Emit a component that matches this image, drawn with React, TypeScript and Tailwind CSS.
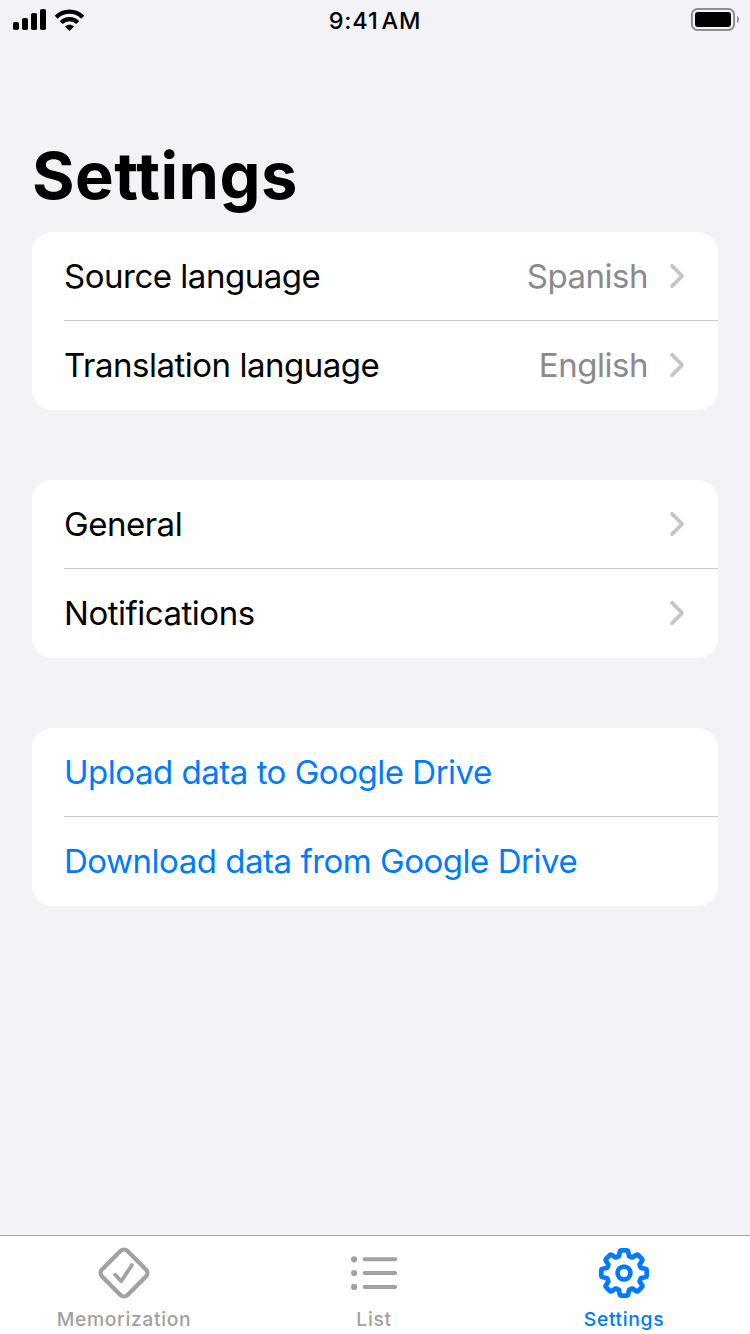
import React from "react";

type Row = { label: string; value?: string; action?: boolean };

function Chevron() {
  return (
    <svg className="ml-5 h-[26px] w-4" viewBox="0 0 16 26" fill="none">
      <path d="M3 2.7 13.2 13 3 23.3" stroke="#c4c4c7" strokeWidth="3.7" strokeLinecap="round" strokeLinejoin="round" />
    </svg>
  );
}

function Group({ rows }: { rows: Row[] }) {
  return (
    <section className="h-[178px] rounded-[20px] bg-white pl-8">
      {rows.map((row, i) => (
        <div key={row.label} className={`flex h-[89px] items-center pr-[33px] text-[33px] leading-[40px] tracking-[-0.48px] ${i === 0 ? "border-b border-[#c6c6c8]" : "pb-px"}`}>
          <span className={`flex-1 whitespace-nowrap ${row.action ? "text-[#007aff]" : "text-black"}`}>{row.label}</span>
          {row.value && <span className="pr-px text-[#8a8a8e]">{row.value}</span>}
          {!row.action && <Chevron />}
        </div>
      ))}
    </section>
  );
}

function Signal() {
  return (
    <svg className="h-10 w-[34px]" viewBox="0 0 34 40">
      <rect x="0" y="22" width="6" height="8" rx="1.8" />
      <rect x="9" y="18" width="6" height="12" rx="1.8" />
      <rect x="18" y="13" width="6" height="17" rx="1.8" />
      <rect x="27" y="9" width="6" height="21" rx="1.8" />
    </svg>
  );
}

function Wifi() {
  return (
    <svg className="h-10 w-8" viewBox="0 0 32 40" fill="none" stroke="#000" strokeWidth="4.2">
      <path d="M2.2 17.2C9.5 9.8 21.5 9.8 28.8 17.2" />
      <path d="M7.3 22.6C11.8 18 19.2 18 23.7 22.6" />
      <path d="M11 26.5C13.7 24 17.3 24 20 26.5L15.5 31Z" fill="#000" stroke="none" />
    </svg>
  );
}

function Battery() {
  return (
    <svg className="h-10 w-[50px]" viewBox="0 0 50 40" fill="none">
      <rect x="1.9" y="9" width="42.2" height="21" rx="5.5" stroke="#8e8e92" strokeWidth="2" />
      <rect x="5" y="12" width="36" height="15" rx="3" fill="#000" />
      <path d="M47 16C49.6 17 49.6 22 47 23Z" fill="#8e8e92" />
    </svg>
  );
}

function MemorizationIcon() {
  return (
    <svg className="h-[54px] w-[54px]" viewBox="0 0 54 54" fill="none" stroke="#a1a1a1" strokeLinecap="round" strokeLinejoin="round">
      <rect x="9" y="9" width="36" height="36" rx="5" strokeWidth="4.2" transform="rotate(45 27 27)" />
      <path d="M18.2 28.7 24.2 35.3 35 19" strokeWidth="3.8" />
    </svg>
  );
}

function ListIcon() {
  return (
    <svg className="h-[54px] w-[54px]" viewBox="0 0 54 54" fill="#a1a1a1">
      {[13.3, 27.1, 40.9].map((y) => (
        <g key={y}>
          <circle cx="7.1" cy={y} r="3.1" />
          <rect x="15.6" y={y - 2} width="34.6" height="4" rx="2" />
        </g>
      ))}
    </svg>
  );
}

function GearIcon() {
  return (
    <svg className="h-[54px] w-[54px]" viewBox="-27 -27 54 54" fill="none" stroke="#007aff" strokeWidth="4.7" strokeLinejoin="round" strokeLinecap="round">
      {[0, 45, 90, 135, 180, 225, 270, 315].map((angle) => (
        <path
          key={angle}
          transform={`rotate(${angle})`}
          d="M-6.7-16.2-5-17-4.2-21.3Q-3.9-22.7-2.4-22.7H2.4Q3.9-22.7 4.2-21.3L5-17 6.7-16.2"
        />
      ))}
      <circle r="6.4" />
    </svg>
  );
}

export default function App() {
  return (
    <div className="flex h-[1334px] w-[750px] flex-col bg-[#f2f2f7] font-[Inter,'Liberation_Sans',sans-serif]">
      <header className="grid h-10 grid-cols-3 items-center">
        <div className="flex gap-[7px] pl-[13px]">
          <Signal />
          <Wifi />
        </div>
        <div className="pt-0.5 text-center text-[23.5px] font-medium tracking-[0.8px] [word-spacing:-4px]">9:41 AM</div>
        <div className="flex justify-end pr-[10px]">
          <Battery />
        </div>
      </header>
      <h1 className="mt-[91px] h-[101px] pl-8 text-[65px] leading-[90px] font-bold tracking-[0.45px]">Settings</h1>
      <main className="flex flex-1 flex-col gap-[70px] px-8">
        <Group rows={[{ label: "Source language", value: "Spanish" }, { label: "Translation language", value: "English" }]} />
        <Group rows={[{ label: "General" }, { label: "Notifications" }]} />
        <Group rows={[{ label: "Upload data to Google Drive", action: true }, { label: "Download data from Google Drive", action: true }]} />
      </main>
      <nav className="grid h-[99px] grid-cols-3 border-t border-[#a7a7aa] bg-white text-[19.3px] leading-6 font-medium tracking-[0.65px] text-[#a1a1a1]">
        <div className="flex flex-col items-center gap-[7px] pt-[10px] pr-0.5">
          <MemorizationIcon />
          <span>Memorization</span>
        </div>
        <div className="flex flex-col items-center gap-[7px] pt-[10px] pr-0.5">
          <ListIcon />
          <span>List</span>
        </div>
        <div className="flex flex-col items-center gap-[7px] pt-[10px] pr-0.5 text-[#007aff]">
          <GearIcon />
          <span>Settings</span>
        </div>
      </nav>
    </div>
  );
}
